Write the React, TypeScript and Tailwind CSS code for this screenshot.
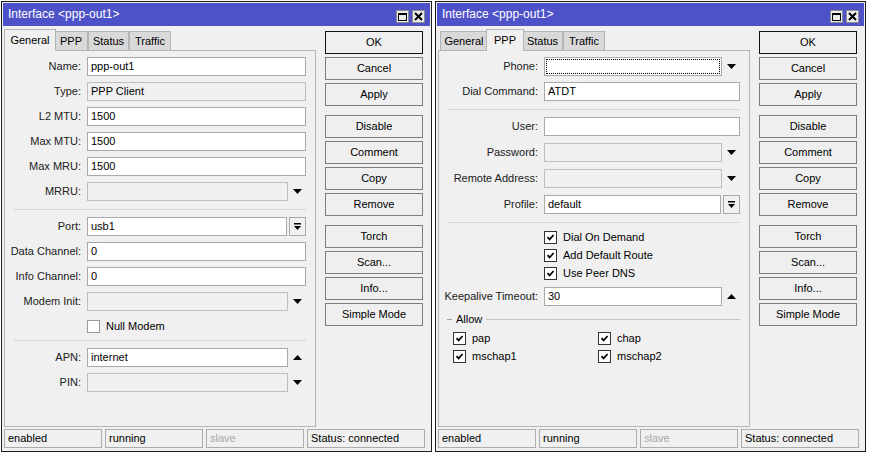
import React from "react";

const Tri = ({ up }: { up?: boolean }) => (
  <svg width="9" height="5" viewBox="0 0 9 5" className="block">
    <polygon points={up ? "0,5 9,5 4.5,0" : "0,0 9,0 4.5,5"} fill="#000" />
  </svg>
);

const Check = ({ on, light }: { on?: boolean; light?: boolean }) => (
  <div
    className={`w-[13px] h-[13px] shrink-0 border bg-white flex items-center justify-center ${
      light ? "border-[#9a9a9a]" : "border-[#333]"
    }`}
  >
    {on && (
      <svg width="9" height="9" viewBox="0 0 9 9" className="block">
        <path d="M1.5 4.2 L3.6 6.4 L7.6 2" stroke="#000" strokeWidth="1.7" fill="none" />
      </svg>
    )}
  </div>
);

type Kind = "plain" | "down" | "up" | "drop";

function Field({
  label,
  lw,
  value = "",
  disabled,
  focus,
  kind = "plain",
}: {
  label: string;
  lw: string;
  value?: string;
  disabled?: boolean;
  focus?: boolean;
  kind?: Kind;
}) {
  return (
    <div className="flex items-center h-[19px] mr-[9px]">
      <div className={`${lw} shrink-0 text-right text-[#202020] whitespace-nowrap`}>{label}</div>
      <div
        className={`ml-[6px] h-[19px] flex-1 min-w-0 flex items-center pl-[3px] border text-black ${
          disabled ? "bg-[#f0f0f0] border-[#bdbdbd]" : "bg-white border-[#a9a9a9]"
        } ${focus ? "outline-1 outline-dotted outline-black -outline-offset-3" : ""}`}
      >
        {value}
      </div>
      {(kind === "down" || kind === "up") && (
        <div className="w-[18px] h-[19px] flex items-center justify-center">
          <Tri up={kind === "up"} />
        </div>
      )}
      {kind === "drop" && (
        <div className="ml-[2px] w-[17px] h-[19px] border border-[#a9a9a9] bg-[#f0f0f0] flex items-center justify-center">
          <svg width="7" height="7" viewBox="0 0 7 7" className="block">
            <rect x="0" y="0" width="7" height="1.5" fill="#000" />
            <polygon points="0,3 7,3 3.5,7" fill="#000" />
          </svg>
        </div>
      )}
    </div>
  );
}

const Sep = ({ cls }: { cls: string }) => (
  <div className={`${cls} mx-[9px] border-t border-[#d4d4d4] h-0`} />
);

function CheckRow({ label, on, light, ml }: { label: string; on?: boolean; light?: boolean; ml: string }) {
  return (
    <div className={`flex items-center h-[18px] ${ml}`}>
      <Check on={on} light={light} />
      <span className="ml-[6px] text-black">{label}</span>
    </div>
  );
}

const tabs = [
  { name: "General", w: "w-[48px]", wa: "w-[52px]" },
  { name: "PPP", w: "w-[34px]", wa: "w-[38px]" },
  { name: "Status", w: "w-[41px]", wa: "w-[45px]" },
  { name: "Traffic", w: "w-[42px]", wa: "w-[46px]" },
];

const buttons = [
  ["OK", "Cancel", "Apply"],
  ["Disable", "Comment", "Copy", "Remove"],
  ["Torch", "Scan...", "Info...", "Simple Mode"],
];

function Window({ active, children }: { active: string; children: React.ReactNode }) {
  return (
    <div className="w-[431px] h-[451px] border border-[#1c1c1c] bg-[#f0f0f0] flex flex-col">
      <div className="mx-[1px] mt-[1px] h-[23px] bg-[#4e52c8] flex items-start shrink-0">
        <span className="ml-[5px] mt-[4px] text-white text-[12px] leading-[14px]">Interface &lt;ppp-out1&gt;</span>
        <div className="ml-auto mr-[5px] mt-[7px] flex gap-[3px]">
          <div className="w-[13px] h-[13px] bg-[#ececec] border border-[#8c8c8c] flex items-center justify-center">
            <div className="w-[9px] h-[8px] border border-black border-t-2" />
          </div>
          <div className="w-[13px] h-[13px] bg-[#ececec] border border-[#8c8c8c] flex items-center justify-center">
            <svg width="9" height="9" viewBox="0 0 9 9" className="block">
              <path d="M1 1 L8 8 M8 1 L1 8" stroke="#000" strokeWidth="2" />
            </svg>
          </div>
        </div>
      </div>
      <div className="flex-1 min-h-0 flex px-[2px] pt-[3px]">
        <div className="w-[312px] flex flex-col">
          <div className="h-[21px] flex items-end pl-[2px] shrink-0">
            {tabs.map((t) =>
              t.name === active ? (
                <div
                  key={t.name}
                  className={`${t.wa} -mx-[2px] h-[22px] -mb-[1px] relative z-10 bg-[#f0f0f0] border border-b-0 border-[#b4b4b4] flex items-center justify-center pb-[1px]`}
                >
                  {t.name}
                </div>
              ) : (
                <div
                  key={t.name}
                  className={`${t.w} h-[19px] bg-[#d9d9d9] border border-b-0 border-[#b4b4b4] flex items-center justify-center`}
                >
                  {t.name}
                </div>
              )
            )}
          </div>
          <div className="flex-1 border border-[#b4b4b4] flex flex-col">{children}</div>
        </div>
        <div className="ml-[9px] w-[98px] mt-[2px] flex flex-col gap-[9px]">
          {buttons.map((g, i) => (
            <div key={i} className="flex flex-col gap-[3px]">
              {g.map((b) => (
                <div
                  key={b}
                  className={`h-[23px] flex items-center justify-center bg-[#efefef] border ${
                    b === "OK" ? "border-[#111] border-[1.5px]" : "border-[#7d7d7d]"
                  }`}
                >
                  {b}
                </div>
              ))}
            </div>
          ))}
        </div>
      </div>
      <div className="mx-[2px] mt-[2px] mb-[3px] h-[19px] flex gap-[3px] shrink-0">
        <div className="w-[98px] border border-[#acacac] pl-[3px] flex items-center">enabled</div>
        <div className="w-[98px] border border-[#acacac] pl-[3px] flex items-center">running</div>
        <div className="w-[98px] border border-[#acacac] pl-[3px] flex items-center text-[#a8a8a8]">slave</div>
        <div className="w-[118px] border border-[#acacac] pl-[3px] flex items-center">Status: connected</div>
      </div>
    </div>
  );
}

export default function App() {
  const L = "w-[76px]";
  const R = "w-[99px]";
  return (
    <div className="w-[871px] h-[457px] bg-white pl-[1px] pt-[1px] flex gap-[3px] font-['Liberation_Sans',Arial,sans-serif] text-[11px] leading-[13px] text-black">
      <Window active="General">
        <div className="pt-[6px] flex flex-col gap-[6px]">
          <Field lw={L} label="Name:" value="ppp-out1" />
          <Field lw={L} label="Type:" value="PPP Client" disabled />
          <Field lw={L} label="L2 MTU:" value="1500" />
          <Field lw={L} label="Max MTU:" value="1500" />
          <Field lw={L} label="Max MRU:" value="1500" />
          <Field lw={L} label="MRRU:" disabled kind="down" />
        </div>
        <Sep cls="mt-[8px] mb-[7px]" />
        <div className="flex flex-col gap-[6px]">
          <Field lw={L} label="Port:" value="usb1" kind="drop" />
          <Field lw={L} label="Data Channel:" value="0" />
          <Field lw={L} label="Info Channel:" value="0" />
          <Field lw={L} label="Modem Init:" disabled kind="down" />
          <div className="h-[19px] flex items-center">
            <CheckRow ml="ml-[82px]" label="Null Modem" light />
          </div>
        </div>
        <Sep cls="mt-[4px] mb-[7px]" />
        <div className="flex flex-col gap-[6px]">
          <Field lw={L} label="APN:" value="internet" kind="up" />
          <Field lw={L} label="PIN:" disabled kind="down" />
        </div>
      </Window>
      <Window active="PPP">
        <div className="pt-[6px] flex flex-col gap-[6px]">
          <Field lw={R} label="Phone:" focus kind="down" />
          <Field lw={R} label="Dial Command:" value="ATDT" />
        </div>
        <Sep cls="mt-[8px] mb-[7px]" />
        <div className="flex flex-col gap-[7px]">
          <Field lw={R} label="User:" />
          <Field lw={R} label="Password:" disabled kind="down" />
          <Field lw={R} label="Remote Address:" disabled kind="down" />
          <Field lw={R} label="Profile:" value="default" kind="drop" />
        </div>
        <Sep cls="mt-[8px] mb-[5px]" />
        <div className="flex flex-col">
          <CheckRow ml="ml-[105px]" label="Dial On Demand" on />
          <CheckRow ml="ml-[105px]" label="Add Default Route" on />
          <CheckRow ml="ml-[105px]" label="Use Peer DNS" on />
        </div>
        <div className="mt-[5px]">
          <Field lw={R} label="Keepalive Timeout:" value="30" kind="up" />
        </div>
        <div className="mt-[6px] h-[14px] flex items-center mr-[9px]">
          <div className="ml-[8px] w-[5px] border-t border-[#a0a0a0]" />
          <span className="mx-[4px]">Allow</span>
          <div className="flex-1 border-t border-[#c4c4c4]" />
        </div>
        <div className="mt-[3px] grid grid-cols-[145px_1fr] ml-[14px]">
          <CheckRow ml="ml-0" label="pap" on />
          <CheckRow ml="ml-0" label="chap" on />
          <CheckRow ml="ml-0" label="mschap1" on />
          <CheckRow ml="ml-0" label="mschap2" on />
        </div>
      </Window>
    </div>
  );
}
